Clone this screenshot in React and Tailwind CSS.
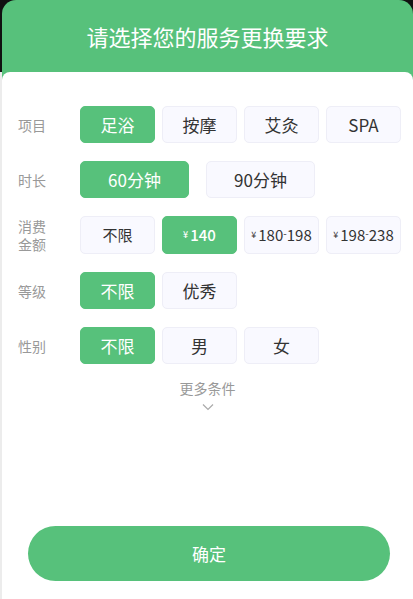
import React, { useState } from "react";

const GREEN = "bg-[#57c17b]";

const ROWS = [
  { key: "item", label: ["项目"], opts: ["足浴", "按摩", "艾灸", "SPA"], wide: false },
  { key: "time", label: ["时长"], opts: ["60分钟", "90分钟"], wide: true },
  { key: "price", label: ["消费", "金额"], opts: ["不限", "¥140", "¥180-198", "¥198-238"], small: true },
  { key: "level", label: ["等级"], opts: ["不限", "优秀"] },
  { key: "sex", label: ["性别"], opts: ["不限", "男", "女"] },
];

function Price({ text }) {
  if (!text.startsWith("¥")) return text;
  const [a, b] = text.slice(1).split("-");
  return (
    <>
      <span className="text-[9px] mr-[2px]">¥</span>
      {a}
      {b && (
        <>
          <span className="text-[10px] relative -top-[3px]">-</span>
          {b}
        </>
      )}
    </>
  );
}

export default function App() {
  const [picked, setPicked] = useState({ item: 0, time: 0, price: 1, level: 0, sex: 0 });

  return (
    <div
      className="flex h-[599px] w-[413px] bg-[#111]"
      style={{ fontFamily: '"Noto Sans CJK SC", "Noto Sans", sans-serif' }}
    >
      <div className="w-[2px] mt-[72px] bg-[#ececec]" />
      <div className={`flex-1 flex flex-col rounded-t-[14px] ${GREEN}`}>
        <header className="h-[72px] flex items-center justify-center text-white text-[22px]">
          请选择您的服务更换要求
        </header>
        <main className="flex-1 flex flex-col bg-white rounded-t-[8px] pt-[34px] pl-[16px]">
          {ROWS.map((row, ri) => (
            <div key={row.key} className={`flex items-center ${ri > 0 ? "mt-[18px]" : ""}`}>
              <div className="w-[62px] text-[14px] leading-[18px] text-[#999]">
                {row.label.map((l) => (
                  <div key={l}>{l}</div>
                ))}
              </div>
              <div className={`flex ${row.wide ? "gap-[17px]" : "gap-[7px]"}`}>
                {row.opts.map((o, i) => {
                  const on = picked[row.key] === i;
                  return (
                    <button
                      key={o}
                      onClick={() => setPicked((p) => ({ ...p, [row.key]: i }))}
                      className={`flex items-center justify-center rounded-[5px] border ${
                        row.wide ? "w-[109px]" : "w-[75px]"
                      } ${row.small ? "h-[38px] text-[15px]" : "h-[37px] text-[17px]"} ${
                        on
                          ? `${GREEN} border-[#57c17b] text-white ${row.small ? "font-medium" : ""}`
                          : "bg-[#f9f9ff] border-[#eeeef7] text-[#333]"
                      }`}
                    >
                      <Price text={o} />
                    </button>
                  );
                })}
              </div>
            </div>
          ))}

          <div className="mt-[14px] -ml-[16px] flex flex-col items-center text-[#999]">
            <span className="text-[14px] leading-[20px]">更多条件</span>
            <svg width="12" height="8" viewBox="0 0 12 8" className="mt-[5px]">
              <path d="M1 1.5 L6 6.5 L11 1.5" fill="none" stroke="#aaa" strokeWidth="1.2" />
            </svg>
          </div>

          <div className="flex-1" />
          <button
            className={`mb-[18px] ml-[10px] mr-[23px] h-[55px] rounded-full ${GREEN} text-white text-[17px]`}
          >
            确定
          </button>
        </main>
      </div>
    </div>
  );
}
